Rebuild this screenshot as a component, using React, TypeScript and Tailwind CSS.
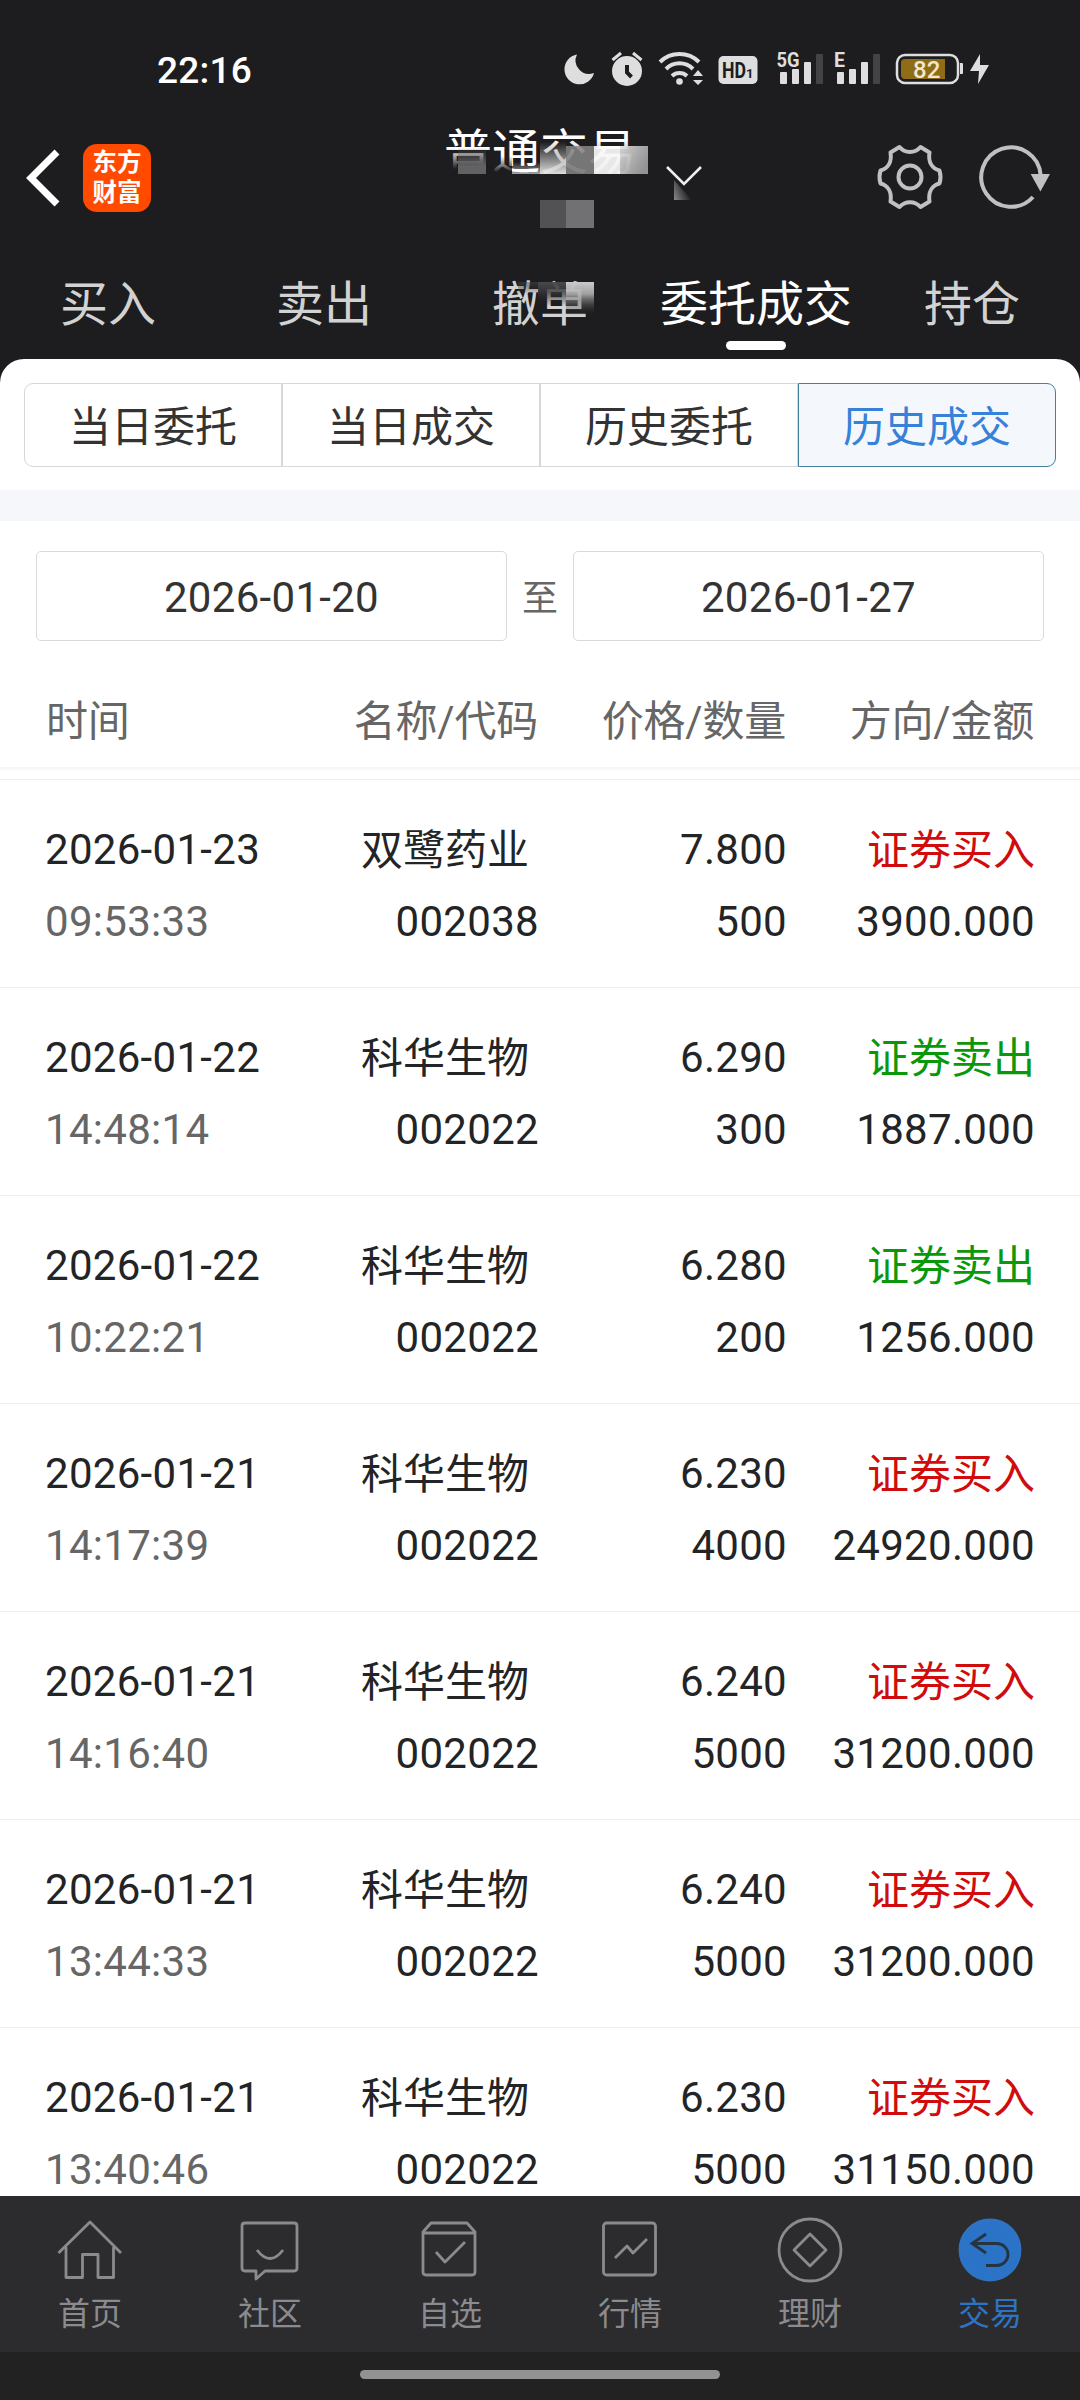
import type { ReactNode } from 'react';

type Trade = {
  date: string;
  time: string;
  name: string;
  code: string;
  price: string;
  qty: string;
  side: 'buy' | 'sell';
  amount: string;
};

const trades: Trade[] = [
  { date: '2026-01-23', time: '09:53:33', name: '双鹭药业', code: '002038', price: '7.800', qty: '500', side: 'buy', amount: '3900.000' },
  { date: '2026-01-22', time: '14:48:14', name: '科华生物', code: '002022', price: '6.290', qty: '300', side: 'sell', amount: '1887.000' },
  { date: '2026-01-22', time: '10:22:21', name: '科华生物', code: '002022', price: '6.280', qty: '200', side: 'sell', amount: '1256.000' },
  { date: '2026-01-21', time: '14:17:39', name: '科华生物', code: '002022', price: '6.230', qty: '4000', side: 'buy', amount: '24920.000' },
  { date: '2026-01-21', time: '14:16:40', name: '科华生物', code: '002022', price: '6.240', qty: '5000', side: 'buy', amount: '31200.000' },
  { date: '2026-01-21', time: '13:44:33', name: '科华生物', code: '002022', price: '6.240', qty: '5000', side: 'buy', amount: '31200.000' },
  { date: '2026-01-21', time: '13:40:46', name: '科华生物', code: '002022', price: '6.230', qty: '5000', side: 'buy', amount: '31150.000' },
];

const tabs = ['买入', '卖出', '撤单', '委托成交', '持仓'];
const segments = ['当日委托', '当日成交', '历史委托', '历史成交'];

function StatusIcons() {
  return (
    <svg width="450" height="60" viewBox="0 0 450 60" fill="#dedede">
      <path d="M27 14.500a15 15 0 1 0 17 18.500A13.500 13.500 0 0 1 27 14.500z" />
      <circle cx="77" cy="31" r="15" />
      <path d="M62.500 20l8.500-7M91.500 20l-8.500-7" stroke="#dedede" strokeWidth="3" />
      <path d="M77 25v7.500l4.500 4.500" stroke="#1d1d1f" strokeWidth="4" fill="none" />
      <g fill="none" stroke="#dedede" strokeWidth="4">
        <path d="M110 22a28 28 0 0 1 39 0" />
        <path d="M116 29a19 19 0 0 1 27 0" />
        <path d="M122 36a11 11 0 0 1 15 0" />
      </g>
      <circle cx="129.500" cy="41.500" r="3.300" />
      <path d="M148 30l5 6h-10zM148 45l5-5h-10z" />
      <rect x="168.500" y="16" width="39" height="28" rx="5" />
      <text fill="#1d1d1f" fontWeight="700" fontFamily="Roboto, sans-serif" x="172" y="38">
        <tspan fontSize="22" textLength="24" lengthAdjust="spacingAndGlyphs">HD</tspan>
        <tspan fontSize="13">1</tspan>
      </text>
      <text x="226.500" y="27" fontSize="20" fontWeight="700" textLength="23" lengthAdjust="spacingAndGlyphs" fontFamily="Roboto, sans-serif">5G</text>
      <rect x="230" y="32" width="7" height="12" rx="1" />
      <rect x="242" y="29" width="7" height="15" rx="1" />
      <rect x="254" y="22" width="7" height="22" rx="1" />
      <rect x="266" y="14" width="7" height="30" rx="1" fill="#434345" />
      <text x="284" y="27" fontSize="20" fontWeight="700" textLength="11" lengthAdjust="spacingAndGlyphs" fontFamily="Roboto, sans-serif">E</text>
      <rect x="287" y="32" width="7" height="12" rx="1" />
      <rect x="299" y="29" width="7" height="15" rx="1" />
      <rect x="311" y="22" width="7" height="22" rx="1" />
      <rect x="323" y="14" width="7" height="30" rx="1" fill="#434345" />
      <rect x="347" y="15" width="61" height="28" rx="8" fill="none" stroke="#dedede" strokeWidth="2.500" />
      <path d="M355 19h40v20h-40a4 4 0 0 1-4-4v-12a4 4 0 0 1 4-4z" fill="#8f6c16" />
      <text x="363" y="38" fill="#f0e7d0" fontSize="24" fontWeight="500" fontFamily="Roboto, sans-serif">82</text>
      <path d="M410 23h2q1 0 1 1v9q0 1-1 1h-2z" />
      <path d="M430 14l-10 17h9l-1 13 11-19h-9z" />
    </svg>
  );
}

function GearIcon() {
  return (
    <svg width="68" height="68" viewBox="0 0 68 68" fill="none" stroke="#c0c0c0" strokeWidth="4">
      <path
        strokeLinejoin="round"
        d="M23.500 4L14.500 9.500C16 19 12 25.500 4.500 27.500Q2.500 34 4.500 40.500C12 42.500 16 49 14.500 58.500L23.500 64C29 57.500 39 57.500 44.500 64L53.500 58.500C52 49 56 42.500 63.500 40.500Q65.500 34 63.500 27.500C56 25.500 52 19 53.500 9.500L44.500 4C39 10.500 29 10.500 23.500 4Z"
      />
      <circle cx="34" cy="34" r="11.500" />
    </svg>
  );
}

function RefreshIcon() {
  return (
    <svg width="72" height="68" viewBox="0 0 72 68" fill="none">
      <path d="M55 54A29.700 29.700 0 1 1 62.600 32" stroke="#c0c0c0" strokeWidth="4" />
      <path d="M52.700 31H72l-9.600 17.500z" fill="#c0c0c0" />
    </svg>
  );
}

function NavItem({ label, active, children }: { label: string; active?: boolean; children: ReactNode }) {
  return (
    <div className={`flex flex-1 flex-col items-center ${active ? 'text-[#2f74c4]' : 'text-[#8b8b8f]'}`}>
      <svg className="mt-5" width="68" height="68" viewBox="0 0 68 68" fill="none" stroke="currentColor" strokeWidth="2.800" strokeLinejoin="round">
        {children}
      </svg>
      <span className="mt-1.5 text-[32px] leading-[48px]">{label}</span>
    </div>
  );
}

export default function App() {
  return (
    <div className="flex h-[2400px] w-[1080px] flex-col overflow-hidden bg-[#1d1d1f] font-[Roboto,'Noto_Sans_CJK_SC',sans-serif]">
      <header className="h-[359px] shrink-0 text-white">
        <div className="flex h-[100px] items-end justify-between pr-[80px] pl-[157px]">
          <span className="pb-[7px] text-[37px] leading-[44px] font-medium tracking-[0.2px]">22:16</span>
          <StatusIcons />
        </div>

        <div className="relative flex h-[154px] items-center justify-between pr-[30px] pl-[26px]">
          <div className="flex items-center gap-[23px] pt-px">
            <svg width="34" height="58" viewBox="0 0 34 58" fill="none" stroke="#fff" strokeWidth="7">
              <path d="M31 3L5 29l26 26" />
            </svg>
            <div className="flex h-[68px] w-[68px] flex-col items-center justify-center rounded-[14px] bg-[#ff4a00] text-[24.500px] leading-[30px] font-bold">
              <span>东方</span>
              <span>财富</span>
            </div>
          </div>
          <div className="flex items-center gap-[34px]">
            <GearIcon />
            <RefreshIcon />
          </div>
          <div className="absolute top-[19px] left-[444px] text-[48px] leading-[68px]">普通交易</div>
          {/* masked account name */}
          <svg className="absolute top-0 left-[420px]" width="300" height="154" viewBox="0 0 300 154">
            <defs>
              <linearGradient id="fade" x1="0" y1="0" x2="0" y2="1">
                <stop offset="0" stopColor="#fff" stopOpacity="0" />
                <stop offset="1" stopColor="#fff" />
              </linearGradient>
              <linearGradient id="fadeDark" x1="0" y1="0" x2="0" y2="1">
                <stop offset="0" stopColor="#1d1d1f" stopOpacity="0" />
                <stop offset="0.750" stopColor="#1d1d1f" />
              </linearGradient>
              <linearGradient id="fadeGray" x1="0" y1="0" x2="0" y2="1">
                <stop offset="0" stopColor="#626264" stopOpacity="0" />
                <stop offset="0.700" stopColor="#626264" />
              </linearGradient>
              <linearGradient id="side" x1="0" y1="0" x2="1" y2="0.600">
                <stop offset="0" stopColor="#e6e6e6" />
                <stop offset="0.500" stopColor="#c0c0c0" />
                <stop offset="1" stopColor="#a0a0a0" />
              </linearGradient>
              <linearGradient id="corner" x1="0" y1="1" x2="0.800" y2="0.600">
                <stop offset="0" stopColor="#8a8a8a" />
                <stop offset="1" stopColor="#1d1d1f" />
              </linearGradient>
            </defs>
            <path d="M24 48h48v28H24z" fill="url(#fadeDark)" />
            <path d="M72 56h20v22H72z" fill="url(#fadeDark)" />
            <path d="M122 40h94v36h-94z" fill="url(#fadeDark)" opacity="0.600" />
            <path d="M38 48h28v26H38z" fill="url(#fadeGray)" />
            <path d="M92 62h28v12H92z" fill="url(#fade)" opacity="0.600" />
            <path d="M120 42h26v32h-26z" fill="url(#fade)" opacity="0.850" />
            <path d="M146 46h28v28h-28z" fill="#868686" opacity="0.850" />
            <path d="M174 46h26v28h-26z" fill="#fff" opacity="0.900" />
            <path d="M200 46h28v28h-28z" fill="url(#side)" opacity="0.900" />
            <path d="M120 100h26v28h-26z" fill="#525254" />
            <path d="M146 100h28v28h-28z" fill="#717173" />
            <path d="M254 80v20h18z" fill="url(#corner)" />
            <path d="M247 67l17 17 17-17" fill="none" stroke="#eee" strokeWidth="2.600" />
          </svg>
        </div>

        <nav className="flex h-[105px] text-[48px] leading-[68px] text-[#d2d2d2]">
          {tabs.map((tab) => (
            <div key={tab} className="relative flex flex-1 flex-col items-center pt-[17px]">
              <span className={tab === '委托成交' ? 'text-white' : ''}>{tab}</span>
              {tab === '委托成交' ? <i className="mt-0.5 h-[9px] w-[60px] rounded-full bg-white" /> : null}
              {tab === '撤单' ? (
                <svg className="absolute top-[28px] left-[86px]" width="76" height="36" viewBox="0 0 76 36">
                  <defs>
                    <linearGradient id="tabFade" x1="0" y1="0" x2="0" y2="1">
                      <stop offset="0" stopColor="#cacaca" />
                      <stop offset="0.350" stopColor="#b0b0b0" stopOpacity="0.900" />
                      <stop offset="1" stopColor="#1d1d1f" stopOpacity="0" />
                    </linearGradient>
                    <linearGradient id="tabDark" x1="0" y1="0" x2="0" y2="1">
                      <stop offset="0" stopColor="#4a4a4c" />
                      <stop offset="0.400" stopColor="#3a3a3c" stopOpacity="0.800" />
                      <stop offset="1" stopColor="#1d1d1f" stopOpacity="0" />
                    </linearGradient>
                  </defs>
                  <path d="M20 0h28v24H20z" fill="url(#tabDark)" />
                  <path d="M0 0h20v12H0z" fill="url(#tabDark)" opacity="0.500" />
                  <path d="M48 0h28v34H48z" fill="url(#tabFade)" />
                </svg>
              ) : null}
            </div>
          ))}
        </nav>
      </header>

      <main className="min-h-0 flex-1 overflow-hidden rounded-t-[24px] bg-white text-[42px] text-[#222426]">
        <div className="flex h-[131px] px-6 pt-6">
          {segments.map((s) => (
            <div
              key={s}
              className={`flex h-[84px] flex-1 items-center justify-center border pt-[5px] first:rounded-l-[9px] last:rounded-r-[9px] ${
                s === '历史成交' ? 'border-[#43819f] bg-[#f4f8fd] text-[#3781d9]' : 'border-[#d5d7d8] text-[#333]'
              }`}
            >
              {s}
            </div>
          ))}
        </div>
        <div className="h-[31px] bg-[#f5f7fa]" />

        <div className="flex items-center px-9 pt-[30px] text-[#333]">
          <div className="flex h-[90px] flex-1 items-center justify-center rounded-[5px] border border-[#d8dadb] pt-0.5 tracking-[0.3px]">2026-01-20</div>
          <span className="w-[66px] pt-1.5 text-center text-[36px] text-[#666]">至</span>
          <div className="flex h-[90px] flex-1 items-center justify-center rounded-[5px] border border-[#d8dadb] pt-0.5 tracking-[0.3px]">2026-01-27</div>
        </div>

        <div className="grid h-[129px] grid-cols-[244px_248px_248px_248px] items-center border-b-3 border-[#f7f7f7] pt-[35px] pl-[46px] text-right leading-[60px] tracking-[-0.2px] text-[#666]">
          <span className="text-left">时间</span>
          <span>名称/代码</span>
          <span>价格/数量</span>
          <span>方向/金额</span>
        </div>

        <div className="mt-[9px]">
          {trades.map((t) => (
            <div
              key={t.time}
              className="grid h-[208px] grid-cols-[246px_248px_248px_248px] grid-rows-[72px_72px] border-t border-[#eee] pt-[34px] pl-[45px] text-right leading-[72px] tracking-[0.3px]"
            >
              <span className="text-left">{t.date}</span>
              <span className="pt-px pr-2.5 tracking-normal">{t.name}</span>
              <span>{t.price}</span>
              <span className={`pt-px tracking-normal ${t.side === 'buy' ? 'text-[#d00c0c]' : 'text-[#0a980a]'}`}>
                {t.side === 'buy' ? '证券买入' : '证券卖出'}
              </span>
              <span className="text-left text-[#666]">{t.time}</span>
              <span>{t.code}</span>
              <span>{t.qty}</span>
              <span>{t.amount}</span>
            </div>
          ))}
        </div>
      </main>

      <footer className="shrink-0">
        <nav className="flex h-[156px] bg-[#2c2c2e]">
          <NavItem label="首页">
            <path d="M2.500 37L34 6l31 31M10 31v30.500h16.500V38.500h15.500v23h15.500V31" />
          </NavItem>
          <NavItem label="社区">
            <path d="M9 7h49q3 0 3 3v42q0 3-3 3H29l-9 8v-8H9q-3 0-3-3V10q0-3 3-3z" />
            <path d="M21 34q13 17 26 0" />
          </NavItem>
          <NavItem label="自选">
            <path d="M7 16v40q0 3 3 3h46q3 0 3-3V16l-8-9H15zM7 17h52M20 36l9 10 20-20" />
          </NavItem>
          <NavItem label="行情">
            <rect x="7.500" y="7" width="52" height="52" rx="3" />
            <path d="M19 42l12-12 6 7 14-14" />
          </NavItem>
          <NavItem label="理财">
            <circle cx="34" cy="34" r="31" />
            <path d="M34 18l16 16-16 16-16-16z" />
          </NavItem>
          <NavItem label="交易" active>
            <circle cx="34" cy="34" r="30" fill="#2b73c7" />
            <path d="M30 18L16 27.500 30 37M16 27.500h25a11 11 0 0 1 0 22H30" stroke="#263341" strokeLinejoin="miter" />
          </NavItem>
        </nav>
        <div className="flex h-12 justify-center bg-[#222] pt-[18px]">
          <div className="h-[9px] w-[360px] rounded-full bg-[#929292]" />
        </div>
      </footer>
    </div>
  );
}
